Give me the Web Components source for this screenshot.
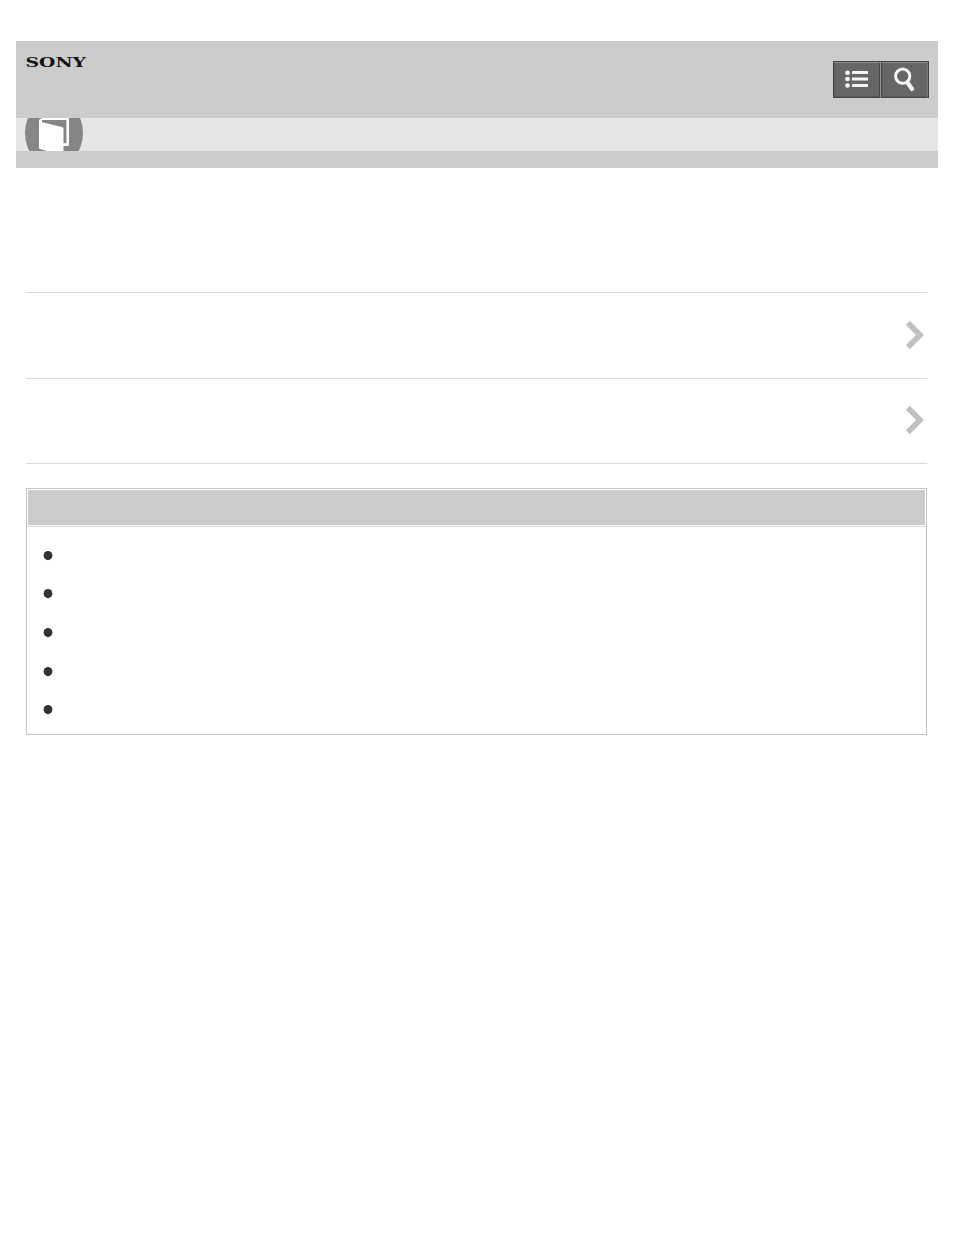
<!DOCTYPE html>
<html lang="en">
<head>
<meta charset="utf-8">
<title>Help Guide</title>
<style>
  body {
    margin: 0;
    padding: 41px 16px 0;
    background: #fff;
    font-family: "Liberation Sans", Arial, sans-serif;
  }
</style>
</head>
<body>
<guide-header>
  <tool-button slot="tools" icon="list"></tool-button>
  <tool-button slot="tools" icon="search"></tool-button>
</guide-header>
<topic-list>
  <topic-link></topic-link>
  <topic-link></topic-link>
</topic-list>
<link-box>
  <link-item></link-item>
  <link-item></link-item>
  <link-item></link-item>
  <link-item></link-item>
  <link-item></link-item>
</link-box>

<script>
const define = (name, html, setup) => {
  const t = document.createElement('template')
  t.innerHTML = html
  customElements.define(name, class extends HTMLElement {
    constructor () {
      super()
      this.attachShadow({mode: 'open'}).appendChild(t.content.cloneNode(true))
    }

    connectedCallback () {
      if (setup) setup(this)
    }
  })
}

const icons = {
  list: `
    <g fill="#f5f5f5">
      <ellipse cx="14.5" cy="11.7" rx="2.4" ry="2.2"/>
      <ellipse cx="14.5" cy="18" rx="2.4" ry="2.2"/>
      <ellipse cx="14.5" cy="24.5" rx="2.4" ry="2.2"/>
      <rect x="19" y="10.1" width="16" height="3" rx=".5"/>
      <rect x="19" y="16.6" width="16" height="3" rx=".5"/>
      <rect x="19" y="23.1" width="16" height="3" rx=".5"/>
    </g>`,
  search: `
    <ellipse cx="21.7" cy="15.2" rx="7.1" ry="7.1" fill="none" stroke="#f5f5f5" stroke-width="3"/>
    <path d="M26.4 21.4 L31 28" stroke="#f5f5f5" stroke-width="4.2" stroke-linecap="round"/>`
}

define('guide-header', `
  <style>
    :host { display: block; background: #ccc; }
    .top {
      display: flex;
      justify-content: space-between;
      align-items: flex-start;
      box-sizing: border-box;
      height: 77px;
      padding: 0 9px 0 10px;
    }
    .logo { display: block; margin-top: 14px; }
    .tools { display: flex; margin-top: 20px; }
    .bar { height: 33px; padding-left: 9px; background: #e6e6e6; }
    .bar svg { display: block; }
    .foot { height: 17px; }
  </style>
  <div class="top">
    <svg class="logo" width="62" height="15">
      <text x="-.5" y="11.8" textLength="60.5" lengthAdjust="spacingAndGlyphs"
        font-family="DejaVu Serif, serif" font-weight="bold" font-size="12.8" fill="#111">SONY</text>
    </svg>
    <div class="tools"><slot name="tools"></slot></div>
  </div>
  <div class="bar">
    <svg width="58" height="33" viewBox="0 0 58 33">
      <ellipse cx="29" cy="15" rx="29" ry="34" fill="#868686"/>
      <path d="M17 .8 H42.7 V26.6 H38" fill="none" stroke="#fff" stroke-width="2.6" stroke-linejoin="round"/>
      <path d="M14 3 Q14 0 17 .5 V4.2 L37 9 Q38.5 9.5 38.5 11 V33 H22 L14 30.8 Z" fill="#fff"/>
    </svg>
  </div>
  <div class="foot"></div>
`)

define('tool-button', `
  <style>
    :host {
      display: block;
      box-sizing: border-box;
      width: 48px;
      height: 37px;
      border: 1px solid #444;
      background: #666;
      box-shadow: inset 0 1px #888, inset -1px 0 #7c7c7c, inset 0 -1px #5a5a5a, inset 1px 0 #5a5a5a;
    }
    :host([icon=list]) { border-right-color: #999; box-shadow: inset 0 1px #888, inset -1px 0 #444, inset 0 -1px #5a5a5a, inset 1px 0 #5a5a5a; }
    svg { display: block; margin: -1px; }
  </style>
  <svg width="48" height="37"></svg>
`, el => {
  el.shadowRoot.querySelector('svg').innerHTML = icons[el.getAttribute('icon')]
})

define('topic-list', `
  <style>
    :host {
      display: block;
      margin: 124px 11px 0 10px;
      border-bottom: 1px solid #dbdbdb;
    }
    ::slotted(:first-child) { height: 86px; }
  </style>
  <slot></slot>
`)

define('topic-link', `
  <style>
    :host {
      display: flex;
      justify-content: flex-end;
      align-items: center;
      box-sizing: border-box;
      height: 85px;
      padding: 0 3px 2px 0;
      border-top: 1px solid #dbdbdb;
    }
    svg { display: block; }
  </style>
  <svg width="19" height="30">
    <path d="M2.8 2.7 L15 15 L2.8 27.3" fill="none" stroke="#c0c0c0" stroke-width="5.6"/>
  </svg>
`)

define('link-box', `
  <style>
    :host {
      display: block;
      box-sizing: border-box;
      height: 247px;
      margin: 24px 11px 0 10px;
      border: 1px solid #c3c3c3;
    }
    .head { padding: 1px; border-bottom: 1px solid #dbdbdb; }
    .title { height: 35px; background: #ccc; }
    .items { padding: 9px 16px 0; }
  </style>
  <div class="head"><div class="title"></div></div>
  <div class="items"><slot></slot></div>
`)

define('link-item', `
  <style>
    :host { display: flex; align-items: center; height: 38.6px; }
    svg { display: block; }
  </style>
  <svg width="10" height="11"><ellipse cx="5" cy="5.6" rx="4.4" ry="4.6" fill="#333"/></svg>
`)
</script>
</body>
</html>
